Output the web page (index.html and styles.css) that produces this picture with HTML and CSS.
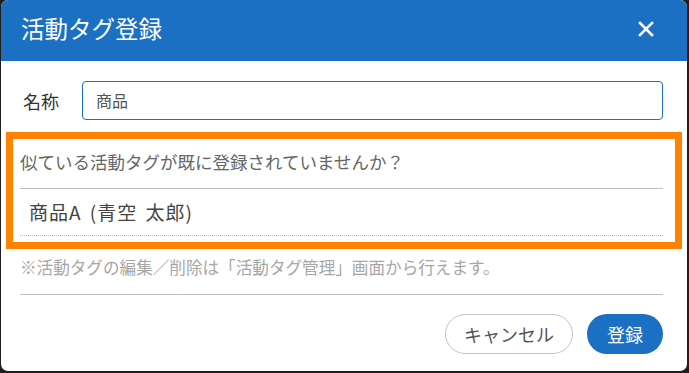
FILE: index.html
```html
<!DOCTYPE html>
<html lang="ja">
<head>
  <meta charset="UTF-8">
  <meta name="viewport" content="width=device-width, initial-scale=1.0">
  <title>活動タグ登録</title>
  <link rel="stylesheet" href="styles.css">
</head>
<body>
  <div class="dialog">
    <div class="dialog-header">
      <span class="dialog-title">活動タグ登録</span>
      <span class="dialog-close">
        <svg width="16" height="16" viewBox="0 0 16 16">
          <path d="M2 2 L14 14 M14 2 L2 14" stroke="#fff" stroke-width="2.6" stroke-linecap="square"/>
        </svg>
      </span>
    </div>
    <div class="dialog-body">
      <div class="name-row">
        <label class="name-label">名称</label>
        <div class="name-input">商品</div>
      </div>
      <div class="similar">
        <div class="similar-title">似ている活動タグが既に登録されていませんか？</div>
        <div class="similar-item">商品A (青空 太郎)</div>
      </div>
      <div class="note">※活動タグの編集／削除は「活動タグ管理」画面から行えます。</div>
      <div class="dialog-footer">
        <button class="btn btn-cancel">キャンセル</button>
        <button class="btn btn-primary">登録</button>
      </div>
    </div>
    <!-- 強調枠 -->
    <div class="highlight"></div>
  </div>
</body>
</html>
```

FILE: styles.css
```css
html, body {
  margin: 0;
  padding: 0;
}
body {
  background-color: #1e1e1e;
  font-family: "Noto Sans CJK JP", "Noto Sans", sans-serif;
  padding: 0 2px 2px 1px;
  width: 686px;
}
.dialog {
  position: relative;
  background: #fff;
  height: 371px;
  border-radius: 7px;
  overflow: hidden;
}
.dialog-header {
  display: flex;
  justify-content: space-between;
  align-items: center;
  height: 61px;
  padding: 0 33px 0 20px;
  background-color: #1c70c4;
  color: #fff;
}
.dialog-title {
  font-size: 23.5px;
  line-height: 1;
  margin-top: -3px;
}
.dialog-close {
  display: flex;
  margin-top: -4px;
}
.dialog-body {
  padding: 20px 24px 0 19px;
}
.name-row {
  display: flex;
  align-items: center;
  height: 39px;
}
.name-label {
  font-size: 18px;
  color: #333;
  width: 62px;
  padding-left: 3px;
  box-sizing: border-box;
}
.name-input {
  flex: 1;
  height: 39px;
  box-sizing: border-box;
  border: 1px solid #1c70c4;
  border-radius: 4px;
  padding: 0 13px;
  font-size: 16px;
  line-height: 37px;
  color: #555;
}
.similar {
  margin-top: 30px;
}
.similar-title {
  font-size: 17.5px;
  line-height: 24px;
  color: #666;
  padding-bottom: 14px;
  border-bottom: 1px solid #bcbfc6;
}
.similar-item {
  font-size: 19px;
  letter-spacing: 1px;
  word-spacing: 3px;
  line-height: 46px;
  color: #444;
  padding-left: 9px;
  border-bottom: 1px dotted #b4b7be;
}
.note {
  margin-top: 20px;
  font-size: 16.6px;
  line-height: 22px;
  color: #a6a6a6;
  padding-bottom: 16px;
  border-bottom: 1px solid #bcbfc6;
}
.dialog-footer {
  display: flex;
  justify-content: flex-end;
  gap: 14px;
  margin-top: 19px;
}
.btn {
  height: 40px;
  border-radius: 20px;
  font-family: inherit;
  font-size: 18px;
  padding: 0;
  cursor: pointer;
}
.btn-cancel {
  width: 128px;
  background: #fff;
  border: 1px solid #c4c4c4;
  color: #555;
}
.btn-primary {
  width: 76px;
  background: #1c70c4;
  border: none;
  color: #fff;
}
.highlight {
  position: absolute;
  left: 5px;
  top: 132px;
  width: 676px;
  height: 117px;
  box-sizing: border-box;
  border: 7px solid #ff8200;
  pointer-events: none;
}
```
